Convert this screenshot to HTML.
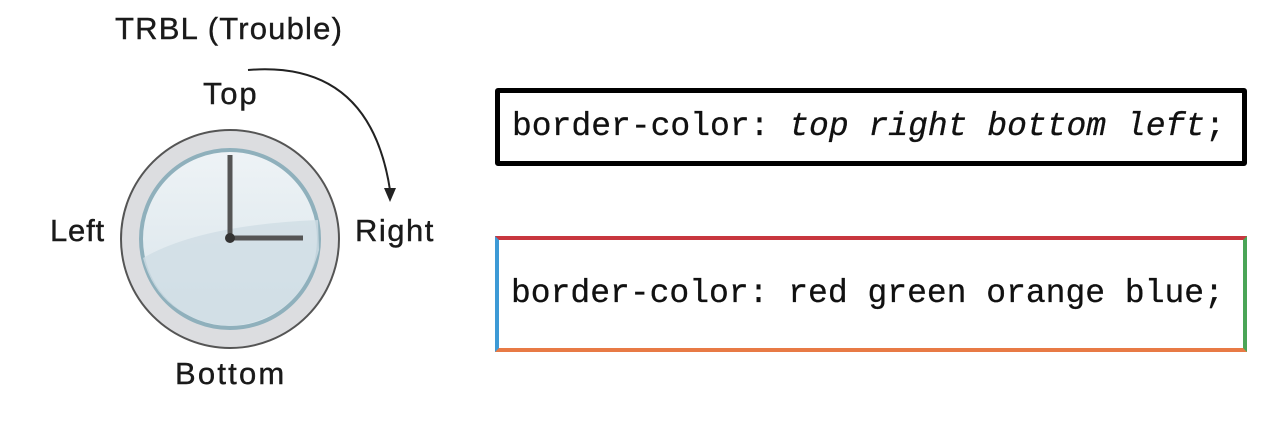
<!DOCTYPE html>
<html><head><style>
body{margin:0;width:1278px;height:440px;background:#fff;position:relative;overflow:hidden;font-family:"Liberation Sans",sans-serif}
.t{position:absolute;font-size:31px;color:#1a1a1a;white-space:nowrap;letter-spacing:0.8px;-webkit-text-stroke:0.4px #1a1a1a}
.box{position:absolute;box-sizing:border-box;font-family:"Liberation Mono",monospace;font-size:33px;color:#111;white-space:nowrap;padding-left:12px;-webkit-text-stroke:0.3px #111}
</style></head><body>
<div class="t" style="left:115px;top:11px;letter-spacing:1.2px">TRBL (Trouble)</div>
<div class="t" style="left:203px;top:76px;letter-spacing:1.8px">Top</div>
<div class="t" style="left:50px;top:213px">Left</div>
<div class="t" style="left:355px;top:213px;letter-spacing:1.5px">Right</div>
<div class="t" style="left:175px;top:356px;letter-spacing:2.2px">Bottom</div>
<svg style="position:absolute;left:0;top:0" width="480" height="440">
<defs><linearGradient id="g" x1="0" y1="0" x2="0" y2="1"><stop offset="0" stop-color="#eef3f6"/><stop offset="1" stop-color="#d8e4ea"/></linearGradient></defs>
<circle cx="230" cy="239" r="109" fill="#dcdde0" stroke="#555" stroke-width="2"/>
<circle cx="230" cy="239" r="89" fill="url(#g)" stroke="#8fb0bc" stroke-width="4"/>
<path d="M143 258 Q200 225 318 220 L319 250 Q300 320 230 326 Q160 320 143 258Z" fill="#cfdde5" opacity="0.8"/>
<line x1="230" y1="155" x2="230" y2="240" stroke="#555" stroke-width="5"/>
<line x1="230" y1="238" x2="303" y2="238" stroke="#555" stroke-width="5"/>
<circle cx="230" cy="238" r="5" fill="#333"/>
<path d="M248 70 Q370 60 390 190" fill="none" stroke="#222" stroke-width="2"/>
<path d="M384 188 L396 188 L390 202Z" fill="#222"/>
</svg>
<div class="box" style="left:495px;top:88px;width:752px;height:78px;border:5px solid #000;border-radius:3px;line-height:68px">border-color: <i>top right bottom left</i>;</div>
<div class="box" style="left:495px;top:236px;width:752px;height:116px;border-style:solid;border-width:4px;border-color:#c8363e #4aa557 #e87a45 #3d9ad6;line-height:108px">border-color: red green orange blue;</div>
</body></html>
